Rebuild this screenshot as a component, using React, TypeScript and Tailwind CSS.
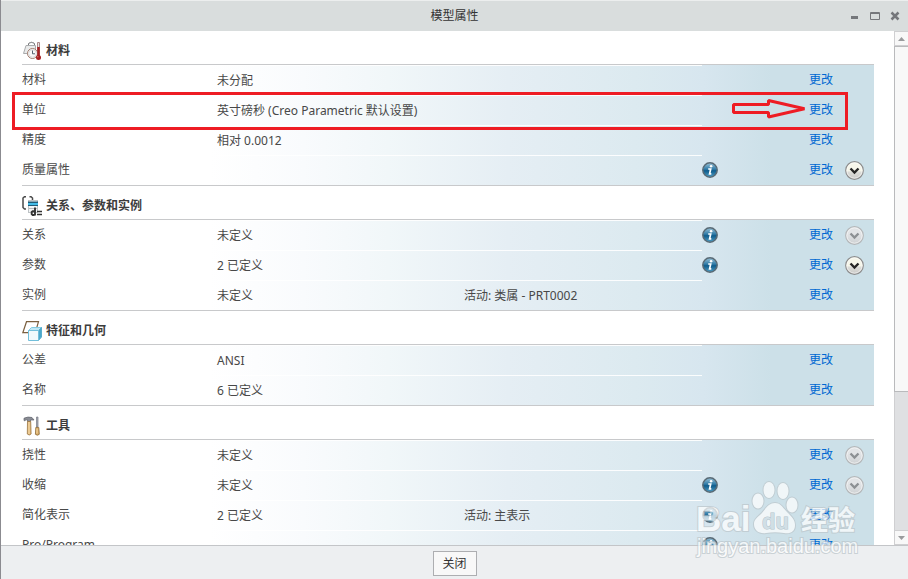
import React from 'react';
import clsx from 'clsx';

interface Property {
  label: string;
  value?: string;
  active?: string;
  info?: boolean;
  expand?: 'enabled' | 'disabled';
  highlighted?: boolean;
}

interface Section {
  title: string;
  icon: React.ReactNode;
  rows: Property[];
}

const MaterialIcon = () => (
  <svg width="20" height="20" viewBox="0 0 20 20" fill="none" aria-hidden="true">
    <path d="M1.5 12.5 4 4.5h9.5v8z" fill="#e9eaea" stroke="#a9abad" />
    <path d="M6.5 4V2.5Q9.5 0 12.5 2.5V4" stroke="#77797b" />
    <path d="M7.5 1.5h4" stroke="#97999b" />
    <circle cx="10.5" cy="12.5" r="5" fill="#fafafa" stroke="#a07a6c" />
    <circle cx="10.5" cy="12.5" r="3.8" stroke="#dcdcdc" />
    <path d="M10.5 9.5v3.3H13" stroke="#54626e" />
    <path d="M15.5 1.5h2v13h-2z" fill="#e9e4e2" stroke="#a9898a" />
    <path d="M16.5 6v11" stroke="#a52022" strokeWidth="2.5" />
    <circle cx="16.5" cy="16.5" r="2.5" fill="#a61f21" />
    <circle cx="15.8" cy="15.8" r=".7" fill="#db7774" />
  </svg>
);

const RelationsIcon = () => (
  <svg width="20" height="20" viewBox="0 0 20 20" fill="none" aria-hidden="true">
    <path d="M4 .7H2.5L1 2v9.5L2.5 13H4" stroke="#4a4a4a" strokeWidth="1.5" />
    <path d="M7.5.7H9L10.5 2v3" stroke="#4a4a4a" strokeWidth="1.5" />
    <rect x="6.5" y="4.5" width="9" height="12" fill="#f3f5f6" stroke="#bdc2c5" />
    <path d="M6 5.5h10V10H6z" fill="#1e5a76" />
    <path d="M6 7h10v2H6z" fill="#43bce8" />
    <path d="M7 12.5h8" stroke="#b4b9bc" />
    <path d="M13 11.5v8M12.5 15.2h-1.800L9.700 16v2l1 1h1.800" stroke="#333" strokeWidth="1.9" />
    <path d="M15 15.5h5M15 18.5h5" stroke="#333" strokeWidth="1.6" />
  </svg>
);

const FeatureIcon = () => (
  <svg width="20" height="20" viewBox="0 0 20 20" fill="none" aria-hidden="true">
    <path d="M4.500.7h12l-3.200 11H.8z" fill="#fff" stroke="#7b6040" strokeWidth="1.2" />
    <path d="m6.5 9.5 3-3h10l-3 3z" fill="#bde7f5" stroke="#83cbe3" />
    <path d="m16.5 9.5 3-3V16l-3 3.500z" fill="#4ba8cb" stroke="#58aecd" />
    <path d="M6.5 9.5h10v10h-10z" fill="#f0fafd" stroke="#72bfdb" />
  </svg>
);

const ToolsIcon = () => (
  <svg width="20" height="20" viewBox="0 0 20 20" fill="none" aria-hidden="true">
    <path d="M2 4.5V2.2Q6 .3 10 1.5L12 4H8.5v1.500h-3V3.800H4l-1.200.9z" fill="#8a8d95" stroke="#5d6068" strokeWidth=".7" />
    <path d="M5.5 5.5h3.200L9.100 18q-1.800 2-3.800 0z" fill="#dfb676" stroke="#9a7642" strokeWidth=".8" />
    <path d="M7 6v12" stroke="#f8deb0" />
    <path d="M14.5 1H16v10h-1.500z" fill="#a6a9b4" stroke="#777a84" strokeWidth=".7" />
    <path d="M13.8 11.5h3l.5 6.800q-1.900 1.800-3.900 0z" fill="#d8aa66" stroke="#8c6938" strokeWidth=".8" />
    <path d="M15 12.5v5" stroke="#f7dca9" />
  </svg>
);

const InfoIcon = () => (
  <svg className="block" width="16" height="16" viewBox="0 0 16 16" aria-hidden="true">
    <defs>
      <linearGradient id="infoFill" x1="0" y1="0" x2="0" y2="1">
        <stop offset="0" stopColor="#9cc3d8" />
        <stop offset=".45" stopColor="#2f7aa6" />
        <stop offset=".55" stopColor="#0f5c8c" />
        <stop offset="1" stopColor="#4f9fc6" />
      </linearGradient>
    </defs>
    <circle cx="8" cy="8" r="7.2" fill="url(#infoFill)" stroke="#596a75" strokeWidth="1.5" />
    <circle cx="9.1" cy="4.2" r="1.3" fill="#fff" />
    <path d="M6.2 7h2.500l-1.100 4.900h1.700" fill="none" stroke="#fff" strokeWidth="1.7" />
  </svg>
);

const ExpandIcon = ({ disabled }: { disabled: boolean }) => (
  <svg className="block" width="19" height="19" viewBox="0 0 19 19" aria-hidden="true">
    <defs>
      <linearGradient id="expandOn" x1="0" y1="0" x2="0" y2="1">
        <stop offset=".5" stopColor="#f6f6ea" />
        <stop offset=".6" stopColor="#dcdcd8" />
        <stop offset="1" stopColor="#c9c9c7" />
      </linearGradient>
      <linearGradient id="expandOff" x1="0" y1="0" x2="0" y2="1">
        <stop offset=".4" stopColor="#e2e4e6" />
        <stop offset="1" stopColor="#cdd0d2" />
      </linearGradient>
    </defs>
    <circle
      cx="9.5"
      cy="9.5"
      r="8.8"
      fill={disabled ? 'url(#expandOff)' : 'url(#expandOn)'}
      stroke={disabled ? '#b4b7b9' : '#8d8d8d'}
      strokeWidth="1.2"
    />
    <circle cx="9.5" cy="9.5" r="7.7" fill="none" stroke="#fff" strokeOpacity=".6" />
    <path
      d="m5.5 7.500 4 4 4-4"
      fill="none"
      stroke={disabled ? '#8c9093' : '#252525'}
      strokeWidth="2.4"
    />
  </svg>
);

const sections: Section[] = [
  {
    title: '材料',
    icon: <MaterialIcon />,
    rows: [
      { label: '材料', value: '未分配' },
      { label: '单位', value: '英寸磅秒 (Creo Parametric 默认设置)', highlighted: true },
      { label: '精度', value: '相对 0.0012' },
      { label: '质量属性', info: true, expand: 'enabled' },
    ],
  },
  {
    title: '关系、参数和实例',
    icon: <RelationsIcon />,
    rows: [
      { label: '关系', value: '未定义', info: true, expand: 'disabled' },
      { label: '参数', value: '2 已定义', info: true, expand: 'enabled' },
      { label: '实例', value: '未定义', active: '活动: 类属 - PRT0002' },
    ],
  },
  {
    title: '特征和几何',
    icon: <FeatureIcon />,
    rows: [
      { label: '公差', value: 'ANSI' },
      { label: '名称', value: '6 已定义' },
    ],
  },
  {
    title: '工具',
    icon: <ToolsIcon />,
    rows: [
      { label: '挠性', value: '未定义', expand: 'disabled' },
      { label: '收缩', value: '未定义', info: true, expand: 'disabled' },
      { label: '简化表示', value: '2 已定义', active: '活动: 主表示', info: true },
      { label: 'Pro/Program', info: true },
    ],
  },
];

// Red frame around a row with an arrow that points at its link
const Highlight = () => (
  <>
    <span className="pointer-events-none absolute -top-[3px] right-[26px] -left-[10px] h-[38px] border-[3px] border-[#ee1c24]" />
    <svg
      className="pointer-events-none absolute top-1 right-[67px]"
      width="76"
      height="20"
      viewBox="0 0 76 20"
      fill="none"
      aria-hidden="true"
    >
      <path
        d="M2.500 5.500h35v-4l36 8.300-36 8.200v-4.500h-35z"
        stroke="#ee1c24"
        strokeWidth="3"
        strokeLinejoin="bevel"
      />
    </svg>
  </>
);

const PropertyRow = ({ row }: { row: Property }) => (
  <tr className="relative h-[30px]">
    <th scope="row" className="p-0 text-left font-normal whitespace-nowrap">
      {row.label}
      {row.highlighted && <Highlight />}
    </th>
    <td className="border-t border-white/90 p-0 whitespace-nowrap">{row.value}</td>
    <td className="border-t border-white/90 p-0 whitespace-nowrap">{row.active}</td>
    <td className="p-0">
      {row.info && (
        <button type="button" aria-label={`${row.label} 信息`} className="block">
          <InfoIcon />
        </button>
      )}
    </td>
    <td className="p-0">
      <a href="#" className="text-[#0068d2]">更改</a>
    </td>
    <td className="p-0">
      {row.expand && (
        <button
          type="button"
          aria-label={`展开 ${row.label}`}
          disabled={row.expand === 'disabled'}
          className="block"
        >
          <ExpandIcon disabled={row.expand === 'disabled'} />
        </button>
      )}
    </td>
  </tr>
);

const PropertySection = ({ section }: { section: Section }) => (
  <section>
    <h2 className="flex h-[33px] items-center gap-1 pt-1.5 font-bold text-[#3c3c3c]">
      {section.icon}
      {section.title}
    </h2>
    <table
      aria-label={section.title}
      className="w-full table-fixed border-separate border-spacing-0 border-y border-[#c8c9cb] bg-[linear-gradient(to_right,#fff_22%,#f9fbfd_33%,#f1f7f9_43%,#e5eef4_57%,#dceaf0_72%,#d7e6ef_80%,#cce0e8_88%)]"
    >
      <colgroup>
        <col className="w-[195px]" />
        <col className="w-[247px]" />
        <col />
        <col className="w-[107px]" />
        <col className="w-9" />
        <col className="w-[29px]" />
      </colgroup>
      <tbody>
        {section.rows.map((row) => (
          <PropertyRow key={row.label} row={row} />
        ))}
      </tbody>
    </table>
  </section>
);

const TitleBar = () => (
  <header className="grid h-[31px] shrink-0 grid-cols-[1fr_auto_1fr] items-center border-t border-[#eceeee] bg-[#d9dddd]">
    <h1 className="col-start-2 text-[#333]">模型属性</h1>
    <div className="flex items-center justify-end gap-2 pr-2 text-[#75777b]">
      <button type="button" aria-label="最小化">
        <svg className="block" width="12" height="12" viewBox="0 0 12 12">
          <path d="M1 6h7v3H1z" fill="currentColor" />
        </svg>
      </button>
      <button type="button" aria-label="最大化">
        <svg className="block" width="12" height="12" viewBox="0 0 12 12" fill="none">
          <path d="M.5 2.5h9v7h-9zM0 3.5h10" stroke="currentColor" />
        </svg>
      </button>
      <button type="button" aria-label="关闭窗口">
        <svg className="block" width="10" height="12" viewBox="0 0 10 12" fill="none">
          <path d="m1.500 2.500 7 7m0-7-7 7" stroke="currentColor" strokeWidth="2.5" />
        </svg>
      </button>
    </div>
  </header>
);

const ScrollButton = ({ up = false }: { up?: boolean }) => (
  <button
    type="button"
    aria-label={up ? '向上滚动' : '向下滚动'}
    className="flex h-[15px] shrink-0 items-center justify-center border border-r-0 border-[#cfcfd1] bg-[#f8f8f8]"
  >
    <svg
      className={clsx('block', !up && 'rotate-180')}
      width="7"
      height="4"
      viewBox="0 0 7 4"
      aria-hidden="true"
    >
      <path d="M3.500 0 7 4H0z" fill="#9a9b9d" />
    </svg>
  </button>
);

const ScrollBar = () => (
  <div className="flex w-3.5 shrink-0 flex-col bg-[#dfe0e2]">
    <ScrollButton up />
    <div className="flex min-h-0 flex-1 flex-col border-l border-[#cfcfd1]">
      <div className="-ml-px h-[71.5%] border border-r-0 border-[#b9babc] bg-[#f8f8f8]" />
    </div>
    <ScrollButton />
  </div>
);

const Watermark = () => (
  <svg
    className="pointer-events-none absolute right-11 bottom-4"
    width="172"
    height="84"
    viewBox="0 0 172 84"
    aria-label="Baidu 经验 jingyan.baidu.com"
    fontFamily='"Liberation Sans", "Noto Sans CJK SC", sans-serif'
    opacity=".72"
    fill="#fff"
    stroke="#bcc6cb"
    strokeWidth="2"
    paintOrder="stroke"
  >
    <ellipse cx="66" cy="22" rx="5.5" ry="7.5" />
    <ellipse cx="77" cy="11" rx="5.5" ry="8" />
    <ellipse cx="91" cy="12" rx="5.5" ry="8" />
    <ellipse cx="100" cy="26" rx="5.5" ry="7.5" />
    <path d="M83 24c6 0 8 5 12 9 5 5 8 8 8 13 0 7-5 9-11 8-6-1-12-1-18 0s-12-2-12-9c0-5 4-7 8-11 4-5 7-10 13-10z" />
    <g fontWeight="700">
      <text x="4" y="52" fontSize="35">Bai</text>
      <text x="70" y="50" fontSize="22" fill="#d3dfe5" stroke="#a8b8c0" strokeWidth="1">du</text>
      <text x="109" y="51" fontSize="27">经验</text>
    </g>
    <text x="5" y="74" fontSize="20">jingyan.baidu.com</text>
  </svg>
);

const App: React.FC = () => {
  return (
    <div className='relative flex h-screen flex-col overflow-hidden border-l border-[#8b8b90] bg-[#edeff1] font-["Noto_Sans","Noto_Sans_CJK_SC",sans-serif] text-xs text-[#484848]'>
      <TitleBar />
      <div className="flex min-h-0 flex-1 bg-white">
        <main className="min-w-0 flex-1 overflow-y-auto pr-5 pl-[21px] [scrollbar-width:none]">
          {sections.map((section) => (
            <PropertySection key={section.title} section={section} />
          ))}
        </main>
        <ScrollBar />
      </div>
      <footer className="flex h-[34px] shrink-0 items-start justify-center border-t border-[#c3c5c8] pt-[5px]">
        <button type="button" className="h-[25px] w-11 border border-[#adaeb1] bg-[#f8f8f8] text-[#333]">
          关闭
        </button>
      </footer>
      <Watermark />
    </div>
  );
};

export default App;
